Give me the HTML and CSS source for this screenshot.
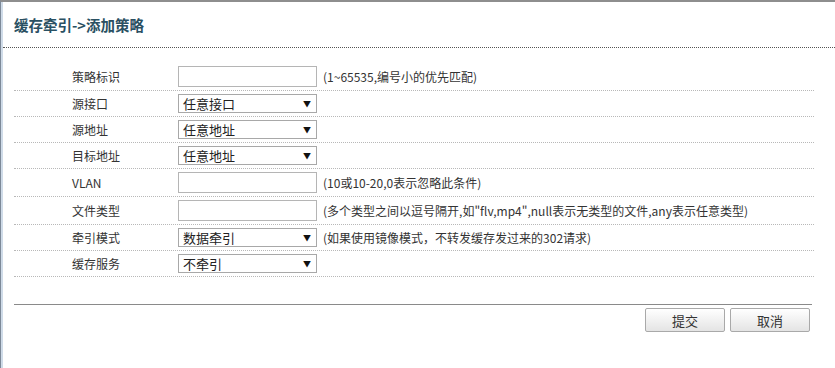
FILE: index.html
```html
<!DOCTYPE html>
<html lang="zh-CN">
<head>
<meta charset="utf-8">
<title>缓存牵引->添加策略</title>
<link rel="stylesheet" href="styles.css">
</head>
<body>
<div class="frame">
  <div class="inner">
    <h1 class="title">缓存牵引-&gt;添加策略</h1>
    <div class="content">
      <div class="form">
        <div class="row tall">
          <span class="label">策略标识</span>
          <span class="field"><input class="text" type="text"></span>
          <span class="hint">(1~65535,编号小的优先匹配)</span>
        </div>
        <div class="row">
          <span class="label">源接口</span>
          <span class="field"><span class="select">任意接口<i class="arrow">▼</i></span></span>
          <span class="hint"></span>
        </div>
        <div class="row">
          <span class="label">源地址</span>
          <span class="field"><span class="select">任意地址<i class="arrow">▼</i></span></span>
          <span class="hint"></span>
        </div>
        <div class="row">
          <span class="label">目标地址</span>
          <span class="field"><span class="select">任意地址<i class="arrow">▼</i></span></span>
          <span class="hint"></span>
        </div>
        <div class="row tall">
          <span class="label">VLAN</span>
          <span class="field"><input class="text" type="text"></span>
          <span class="hint">(10或10-20,0表示忽略此条件)</span>
        </div>
        <div class="row tall">
          <span class="label">文件类型</span>
          <span class="field"><input class="text" type="text"></span>
          <span class="hint">(多个类型之间以逗号隔开,如"flv,mp4",null表示无类型的文件,any表示任意类型)</span>
        </div>
        <div class="row">
          <span class="label">牵引模式</span>
          <span class="field"><span class="select">数据牵引<i class="arrow">▼</i></span></span>
          <span class="hint">(如果使用镜像模式，不转发缓存发过来的302请求)</span>
        </div>
        <div class="row">
          <span class="label">缓存服务</span>
          <span class="field"><span class="select">不牵引<i class="arrow">▼</i></span></span>
          <span class="hint"></span>
        </div>
      </div>
      <div class="actions">
        <button class="btn" type="button">提交</button>
        <button class="btn" type="button">取消</button>
      </div>
    </div>
  </div>
</div>
</body>
</html>
```
FILE: styles.css
```css
html, body {
  margin: 0;
  padding: 0;
  background: #ffffff;
}
body {
  font-family: "Noto Sans CJK SC", "Noto Sans", sans-serif;
  font-size: 12px;
  color: #333333;
}
.frame {
  height: 366px;
  border-top: 2px solid #8e8e8e;
  border-left: 1px solid #7d8998;
}
.inner {
  height: 100%;
  border-left: 2px solid #cfdbe8;
}
.title {
  margin: 0 0 15px 0;
  padding-left: 11px;
  height: 45px;
  line-height: 45px;
  font-size: 14.5px;
  font-weight: bold;
  color: #2a5062;
  border-bottom: 1px dotted #555555;
}
.content {
  margin-left: 11px;
  width: 800px;
}
.form {
  display: flex;
  flex-direction: column;
}
.row {
  display: grid;
  grid-template-columns: 164px 145px 1fr;
  align-items: center;
  height: 25px;
  border-bottom: 1px dotted #b8b8b8;
}
.row.tall {
  height: 27px;
}
.label {
  padding-left: 58px;
  color: #333333;
}
.field {
  display: flex;
  align-items: center;
}
.text {
  box-sizing: border-box;
  width: 139px;
  height: 21px;
  margin: 0;
  padding: 0 3px;
  border: 1px solid #b5b5b5;
  background: #ffffff;
  font: inherit;
}
.select {
  box-sizing: border-box;
  width: 139px;
  height: 19px;
  display: flex;
  align-items: center;
  justify-content: space-between;
  padding: 0 5px 0 4px;
  border: 1px solid #a8a8a8;
  background: #ffffff;
  font-size: 13px;
  color: #222222;
}
.arrow {
  font-style: normal;
  font-size: 8px;
  color: #111111;
}
.hint {
  white-space: nowrap;
  color: #333333;
}
.actions {
  box-sizing: border-box;
  margin-top: 27px;
  padding: 3px 2px 0 0;
  border-top: 1px solid #8a8a8a;
  width: 798px;
  display: flex;
  justify-content: flex-end;
  gap: 5px;
}
.btn {
  box-sizing: border-box;
  width: 80px;
  height: 24px;
  margin: 0;
  padding: 0;
  border: 1px solid #a9a9a9;
  border-radius: 2px;
  background: linear-gradient(#ffffff, #e4e4e4);
  font-family: "Noto Sans CJK SC", sans-serif;
  font-size: 13px;
  color: #333333;
}
```
